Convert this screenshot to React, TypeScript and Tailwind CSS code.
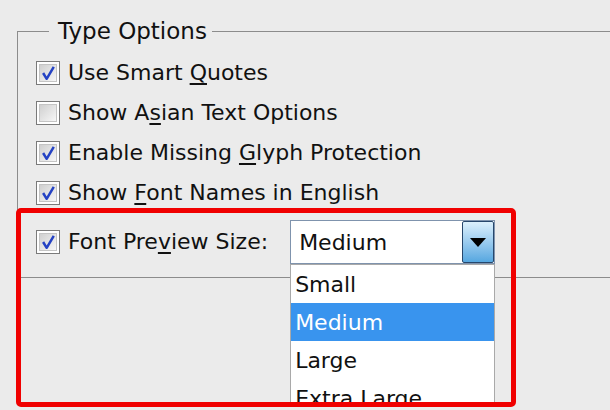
import type { ReactNode } from "react";

const font = { fontFamily: '"DejaVu Sans", sans-serif' };

function Checkbox({ checked }: { checked: boolean }) {
  return (
    <div className="flex h-[24px] w-[24px] shrink-0 items-center justify-center border border-[#7a7a7a] bg-white p-[2px]">
      <div className="relative h-full w-full border border-[#c4c4c4] bg-gradient-to-br from-[#d0d0d0] to-[#f7f7f7]">
        {checked ? (
          <svg viewBox="0 0 18 18" className="absolute inset-0 h-full w-full">
            <path d="M3.5 9 L7.5 15.5 L15.5 2" fill="none" stroke="#2442c4" strokeWidth="2.8" strokeLinejoin="round" />
          </svg>
        ) : null}
      </div>
    </div>
  );
}

function Row({ checked, children }: { checked: boolean; children: ReactNode }) {
  return (
    <div className="flex h-[40px] items-center gap-[8px]">
      <Checkbox checked={checked} />
      <span className="text-[22px] leading-none text-[#111]">{children}</span>
    </div>
  );
}

const Key = ({ c }: { c: string }) => <span className="underline decoration-[1.5px] underline-offset-[3px]">{c}</span>;

export default function App() {
  return (
    <div className="relative h-[410px] w-[610px] overflow-hidden bg-[#ebebeb]" style={font}>
      <fieldset className="ml-[17px] mt-[17px] w-[700px] border border-[#8c8c8c] pb-[13px] pl-[18px]">
        <legend className="ml-[13px] pl-[9px] pr-[5px] text-[23px] leading-[28px] text-[#111]">Type Options</legend>
        <div className="mt-[8px] flex flex-col">
          <Row checked>
            Use Smart <Key c="Q" />uotes
          </Row>
          <Row checked={false}>
            Show A<Key c="s" />ian Text Options
          </Row>
          <Row checked>
            Enable Missing <Key c="G" />lyph Protection
          </Row>
          <Row checked>
            Show <Key c="F" />ont Names in English
          </Row>
          <div className="mt-[7px] flex h-[44px] items-center">
            <div className="flex items-center gap-[8px]">
              <Checkbox checked />
              <span className="text-[22px] leading-none text-[#111]">
                Font Pre<Key c="v" />iew Size:
              </span>
            </div>
            <div className="relative ml-[22px] flex h-[44px] w-[205px] border border-[#7f93ad] bg-white">
              <div className="flex flex-1 items-center pl-[8px] text-[22px] text-[#111]">Medium</div>
              <div className="flex w-[32px] items-center justify-center rounded-[2px] border border-[#27476c] bg-gradient-to-b from-[#dcf0fc] to-[#55a7e0]">
                <svg width="16" height="9" viewBox="0 0 16 9">
                  <path d="M0 0 H16 L8 9 Z" fill="#000" />
                </svg>
              </div>
              <div className="absolute left-[-1px] top-[43px] z-10 h-[140px] w-[205px] overflow-hidden border border-[#a9a9a9] bg-white">
                {["Small", "Medium", "Large", "Extra Large"].map((item) => (
                  <div
                    key={item}
                    className={`flex h-[38px] items-center pl-[4px] text-[22px] ${item === "Medium" ? "bg-[#3994ee] text-white" : "text-[#111]"}`}
                  >
                    {item}
                  </div>
                ))}
              </div>
            </div>
          </div>
        </div>
      </fieldset>
      <div className="pointer-events-none absolute left-[16px] top-[208px] z-20 h-[199px] w-[500px] rounded-[5px] border-[5px] border-[#f00000]" />
    </div>
  );
}
